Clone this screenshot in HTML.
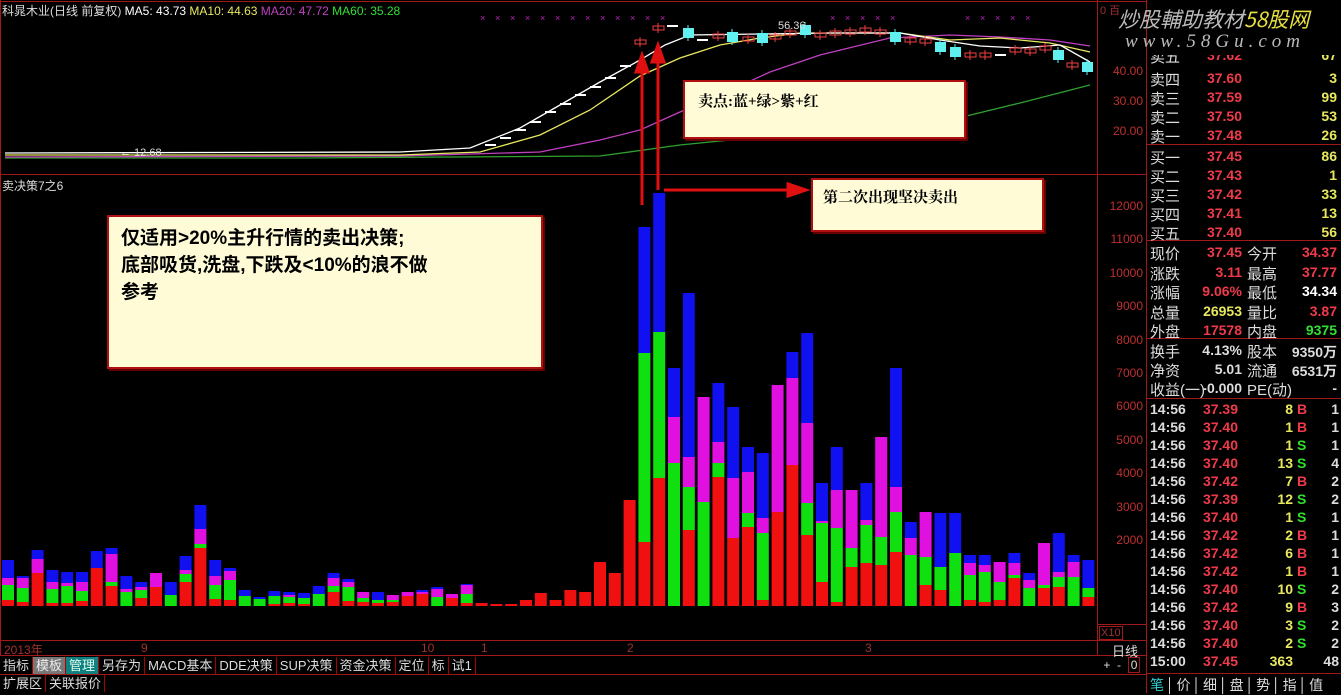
<!DOCTYPE html>
<html><head><meta charset="utf-8">
<style>
*{margin:0;padding:0;box-sizing:border-box}
body{width:1341px;height:693px;background:#000;overflow:hidden;position:relative;font-family:"Liberation Sans","Noto Sans CJK SC",sans-serif;color:#ddd}
.a{position:absolute;white-space:nowrap}
.box{position:absolute;background:#fefbd6;border:2px solid #b01010;box-shadow:2px 2px 0 #600;font-family:"Liberation Serif","Noto Serif CJK SC",serif;color:#000;font-weight:bold}
.r{color:#f03a4a}.y{color:#e8e860}.g{color:#30e030}.w{color:#fff}
.lb{font-size:15px;color:#ddd}
.num{font-size:14px;font-weight:bold}
.tb span{display:inline-block;padding:0 3px;border-right:1px solid #a00;height:17px;line-height:17px;font-size:13px;color:#ddd}
</style></head><body>
<svg id="sv" width="1341" height="693" style="position:absolute;left:0;top:0">
<g stroke="#a01818" stroke-width="1" fill="none">
<line x1="0.5" y1="0" x2="0.5" y2="655"/>
<line x1="0" y1="1.5" x2="1146" y2="1.5"/>
<line x1="0" y1="174.5" x2="1146" y2="174.5"/>
<line x1="1097.5" y1="0" x2="1097.5" y2="655"/>
<line x1="1146.5" y1="0" x2="1146.5" y2="693"/>
<line x1="1147" y1="144.5" x2="1341" y2="144.5"/>
<line x1="1147" y1="240.5" x2="1341" y2="240.5"/>
<line x1="1147" y1="338.5" x2="1341" y2="338.5"/>
<line x1="1147" y1="398.5" x2="1341" y2="398.5"/>
<line x1="1147" y1="673.5" x2="1341" y2="673.5"/>
<line x1="0" y1="640.5" x2="1146" y2="640.5"/>
<line x1="0" y1="655.5" x2="1146" y2="655.5"/>
<line x1="0" y1="674.5" x2="1146" y2="674.5"/>
<line x1="1097" y1="624.5" x2="1146" y2="624.5"/>
</g>
<g id="bars"></g>
<g fill="none" stroke-width="1.3">
<polyline stroke="#2ea02e" points="5,158 300,158 600,156 680,145 800,133 950,120 1020,103 1090,85"/>
<polyline stroke="#c040c0" points="5,157 400,156 540,152 600,140 640,130 680,112 720,95 770,72 820,55 890,38 950,35 1000,37 1050,40 1090,46"/>
<polyline stroke="#e8e860" points="5,155 400,155 480,152 540,135 590,110 640,76 680,58 720,45 760,38 800,33 900,33 950,40 1000,38 1050,43 1090,52"/>
<polyline stroke="#fff" points="5,153 400,152 470,148 520,128 560,105 600,82 640,60 665,45 690,35 760,34 830,33 900,33 940,40 980,46 1020,48 1060,45 1090,62"/>
</g>
<g id="cand"></g>
<g fill="#c020c0" font-size="9" id="xs"></g>
<g stroke="#e01010" stroke-width="3" fill="#e01010">
<line x1="642" y1="205" x2="642" y2="70"/><polygon points="636,72 648,72 642,55"/>
<line x1="658" y1="190" x2="658" y2="60"/><polygon points="652,62 664,62 658,45"/>
<line x1="664" y1="190" x2="790" y2="190"/><polygon points="788,184 788,196 806,190"/>
</g>
</svg>
<div class="a" style="left:2px;top:2px;font-size:12px;color:#ddd">科晁木业(日线 前复权) <span class="w">MA5: 43.73</span> <span class="y">MA10: 44.63</span> <span style="color:#c040c0">MA20: 47.72</span> <span class="g">MA60: 35.28</span></div>
<div class="a" style="left:1100px;top:2px;font-size:11px;color:#a03030">0 百</div>
<div class="a" style="left:778px;top:20px;font-size:11px;color:#ddd">56.36</div>
<div class="a" style="left:120px;top:147px;font-size:11px;color:#ddd">← 12.68</div>
<div class="a" style="left:2px;top:177px;font-size:12px;color:#ddd">卖决策7之6</div>
<div id="ax"></div>
<div class="box" style="left:683px;top:80px;width:283px;height:59px;font-size:15px;padding:8px 0 0 13px">卖点:蓝+绿&gt;紫+红</div>
<div class="box" style="left:811px;top:178px;width:233px;height:54px;font-size:15px;padding:6px 0 0 10px">第二次出现坚决卖出</div>
<div class="box" style="left:107px;top:215px;width:436px;height:154px;font-size:19px;line-height:27px;padding:8px 0 0 12px;font-family:'Liberation Sans','Noto Sans CJK SC',sans-serif">仅适用&gt;20%主升行情的卖出决策;<br>底部吸货,洗盘,下跌及&lt;10%的浪不做<br>参考</div>
<div class="a" style="left:4px;top:641px;font-size:12px;color:#a03030">2013年</div>
<div class="a" style="left:141px;top:641px;font-size:12px;color:#a03030">9</div>
<div class="a" style="left:421px;top:641px;font-size:12px;color:#a03030">10</div>
<div class="a" style="left:481px;top:641px;font-size:12px;color:#a03030">1</div>
<div class="a" style="left:627px;top:641px;font-size:12px;color:#a03030">2</div>
<div class="a" style="left:865px;top:641px;font-size:12px;color:#a03030">3</div>
<div class="a" style="left:1099px;top:626px;font-size:11px;color:#a03030;border:1px solid #a01818;padding:0 1px">X10</div>
<div class="a" style="left:1112px;top:641px;font-size:13px;color:#ddd">日线</div>
<div class="a" style="left:1100px;top:658px;font-size:12px;color:#ddd">&nbsp;+&nbsp;&nbsp;-&nbsp;&nbsp;<span style="border:1px solid #a01818;padding:0 2px">0</span></div>
<div class="a tb" style="left:0;top:657px"><span>指标</span><span style="background:#777;color:#eee">模板</span><span style="background:#108080;color:#dfe">管理</span><span>另存为</span><span>MACD基本</span><span>DDE决策</span><span>SUP决策</span><span>资金决策</span><span>定位</span><span>标</span><span>试1</span></div>
<div class="a tb" style="left:0;top:675px"><span>扩展区</span><span>关联报价</span></div>
<div id="rp"></div>
<div class="a" style="left:1147px;top:0;width:194px;height:55px;background:#000"></div>
<div class="a" style="left:1118px;top:4px;font-size:21px;font-style:italic;color:#bbb;font-family:'Noto Sans CJK SC',sans-serif">炒股輔助教材<span style="color:#e8e040">58股网</span></div>
<div class="a" style="left:1125px;top:31px;font-size:19px;font-style:italic;color:#bbb;letter-spacing:5px;font-family:'Liberation Serif',serif">www.58Gu.com</div>
<div class="a" style="left:1150px;top:675px;font-size:14px;color:#ddd;letter-spacing:-1px"><span style="color:#30d0d0">笔</span> │ 价 │ 细 │ 盘 │ 势 │ 指 │ 值</div>
<script>
var bars=[[6,15,7,18],[4,14,10,2],[33,0,14,9],[3,14,7,12],[3,17,3,11],[5,10,9,10],[38,0,0,17],[20,4,28,6],[0,14,3,13],[8,8,3,5],[19,0,14,0],[0,11,0,13],[24,8,4,14],[58,4,15,24],[7,14,9,16],[6,20,9,3],[0,10,0,6],[0,7,0,2],[2,8,0,5],[3,6,2,3],[2,6,0,5],[0,12,0,8],[14,6,8,5],[5,14,5,3],[4,4,6,0],[3,3,0,8],[4,2,5,0],[10,0,4,0],[12,0,2,2],[0,9,8,2],[8,0,4,0],[3,9,9,1],[3,0,0,0],[2,0,0,0],[2,0,0,0],[6,0,0,0],[13,0,0,0],[6,0,0,0],[16,0,0,0],[14,0,0,0],[44,0,0,0],[33,0,0,0],[106,0,0,0],[64,189,0,126],[128,146,0,139],[0,143,46,49],[76,43,30,164],[0,104,105,0],[129,14,21,59],[68,0,60,71],[79,14,41,25],[6,67,15,65],[94,0,127,0],[141,0,87,26],[71,32,80,90],[24,59,2,38],[4,74,38,43],[39,19,58,0],[43,38,5,37],[41,28,100,0],[54,40,25,119],[0,51,17,16],[21,28,45,0],[16,23,0,54],[0,53,0,40],[6,25,12,8],[4,30,7,10],[6,18,20,0],[28,3,12,10],[0,18,8,7],[18,3,42,0],[19,10,5,39],[0,29,15,7],[9,9,0,28]];
var cols=["#f01010","#10e010","#e010e0","#1010f0"],s="";
bars.forEach(function(b,i){var x=2+i*14.8,y=606;for(var k=0;k<4;k++){if(b[k]){y-=b[k];s+='<rect x="'+x.toFixed(1)+'" y="'+y+'" width="12" height="'+b[k]+'" fill="'+cols[k]+'"/>';}}});
document.getElementById('bars').innerHTML=s;
var c="",cd=[[490,145,"w"],[505,138,"w"],[520,130,"w"],[535,122,"w"],[550,112,"w"],[565,104,"w"],[580,95,"w"],[595,87,"w"],[610,78,"w"],[625,66,"w"],[640,42,"r"],[658,28,"r"],[672,26,"w"],[688,33,"c"],[702,40,"w"],[718,36,"r"],[732,37,"c"],[748,39,"r"],[762,38,"c"],[775,37,"r"],[790,33,"r"],[805,30,"c"],[820,35,"r"],[835,33,"r"],[850,32,"r"],[865,30,"r"],[880,32,"r"],[895,37,"c"],[910,40,"r"],[925,41,"r"],[940,47,"c"],[955,52,"c"],[970,55,"r"],[985,55,"r"],[1000,55,"w"],[1015,50,"r"],[1030,51,"r"],[1045,48,"r"],[1058,55,"c"],[1072,65,"r"],[1087,67,"c"]];
cd.forEach(function(d){var col=d[2]=="c"?"#60f0f0":(d[2]=="r"?"#f04040":"#fff");if(d[2]=="c")c+='<rect x="'+(d[0]-5)+'" y="'+(d[1]-5)+'" width="11" height="10" fill="'+col+'"/><line x1="'+d[0]+'" y1="'+(d[1]-8)+'" x2="'+d[0]+'" y2="'+(d[1]+8)+'" stroke="'+col+'"/>';else if(d[2]=="r")c+='<rect x="'+(d[0]-5)+'" y="'+(d[1]-2)+'" width="11" height="4" fill="none" stroke="'+col+'"/><line x1="'+d[0]+'" y1="'+(d[1]-5)+'" x2="'+d[0]+'" y2="'+(d[1]+5)+'" stroke="'+col+'"/>';else c+='<line x1="'+(d[0]-5)+'" y1="'+d[1]+'" x2="'+(d[0]+6)+'" y2="'+d[1]+'" stroke="#fff" stroke-width="2"/>';});
document.getElementById('cand').innerHTML=c;
var xs="";[480,495,510,525,540,555,570,585,600,615,630,645,660,830,845,860,875,890,965,980,995,1010,1025].forEach(function(x){xs+='<text x="'+x+'" y="21">×</text>';});
document.getElementById('xs').innerHTML=xs;
var ax="";[["40.00",64],["30.00",94],["20.00",124]].forEach(function(a){ax+='<div class="a" style="right:198px;top:'+a[1]+'px;font-size:12px;color:#c03030">'+a[0]+'</div>';});
[12000,11000,10000,9000,8000,7000,6000,5000,4000,3000,2000].forEach(function(v,i){ax+='<div class="a" style="right:198px;top:'+(199+i*33.4).toFixed(0)+'px;font-size:12px;color:#c03030">'+v+'</div>';});
document.getElementById('ax').innerHTML=ax;
var rp="",ob=[["卖五","37.62","67",46],["卖四","37.60","3",69],["卖三","37.59","99",88],["卖二","37.50","53",107],["卖一","37.48","26",126],["买一","37.45","86",147],["买二","37.43","1",166],["买三","37.42","33",185],["买四","37.41","13",204],["买五","37.40","56",223]];
ob.forEach(function(o){rp+='<div class="a lb" style="left:1150px;top:'+o[3]+'px">'+o[0]+'</div><div class="a num r" style="right:99px;top:'+(o[3]+1)+'px">'+o[1]+'</div><div class="a num y" style="right:4px;top:'+(o[3]+1)+'px">'+o[2]+'</div>';});
var st=[["现价","37.45","r","今开","34.37","r"],["涨跌","3.11","r","最高","37.77","r"],["涨幅","9.06%","r","最低","34.34","w"],["总量","26953","y","量比","3.87","r"],["外盘","17578","r","内盘","9375","g"]];
st.forEach(function(o,i){var t=243+i*19.5;rp+='<div class="a lb" style="left:1150px;top:'+t+'px">'+o[0]+'</div><div class="a num '+o[2]+'" style="right:99px;top:'+(t+1)+'px">'+o[1]+'</div><div class="a lb" style="left:1247px;top:'+t+'px">'+o[3]+'</div><div class="a num '+o[5]+'" style="right:4px;top:'+(t+1)+'px">'+o[4]+'</div>';});
var s2=[["换手","4.13%","股本","9350万"],["净资","5.01","流通","6531万"],["收益(一)","-0.000","PE(动)","-"]];
s2.forEach(function(o,i){var t=341+i*19;rp+='<div class="a lb" style="left:1150px;top:'+t+'px">'+o[0]+'</div><div class="a num w" style="right:99px;top:'+(t+1)+'px;color:#ddd">'+o[1]+'</div><div class="a lb" style="left:1247px;top:'+t+'px">'+o[2]+'</div><div class="a num" style="right:4px;top:'+(t+1)+'px;color:#ddd">'+o[3]+'</div>';});
var tk=[["14:56","37.39","8","B","1"],["14:56","37.40","1","B","1"],["14:56","37.40","1","S","1"],["14:56","37.40","13","S","4"],["14:56","37.42","7","B","2"],["14:56","37.39","12","S","2"],["14:56","37.40","1","S","1"],["14:56","37.42","2","B","1"],["14:56","37.42","6","B","1"],["14:56","37.42","1","B","1"],["14:56","37.40","10","S","2"],["14:56","37.42","9","B","3"],["14:56","37.40","3","S","2"],["14:56","37.40","2","S","2"],["15:00","37.45","363","","48"]];
tk.forEach(function(o,i){var t=401+i*18;rp+='<div class="a num" style="left:1150px;top:'+t+'px;color:#ddd">'+o[0]+'</div><div class="a num r" style="right:103px;top:'+t+'px">'+o[1]+'</div><div class="a num y" style="right:48px;top:'+t+'px">'+o[2]+'</div><div class="a num '+(o[3]=="B"?"r":"g")+'" style="left:1297px;top:'+t+'px">'+o[3]+'</div><div class="a num" style="right:2px;top:'+t+'px;color:#ddd">'+o[4]+'</div>';});
document.getElementById('rp').innerHTML=rp;
</script>
</body></html>
